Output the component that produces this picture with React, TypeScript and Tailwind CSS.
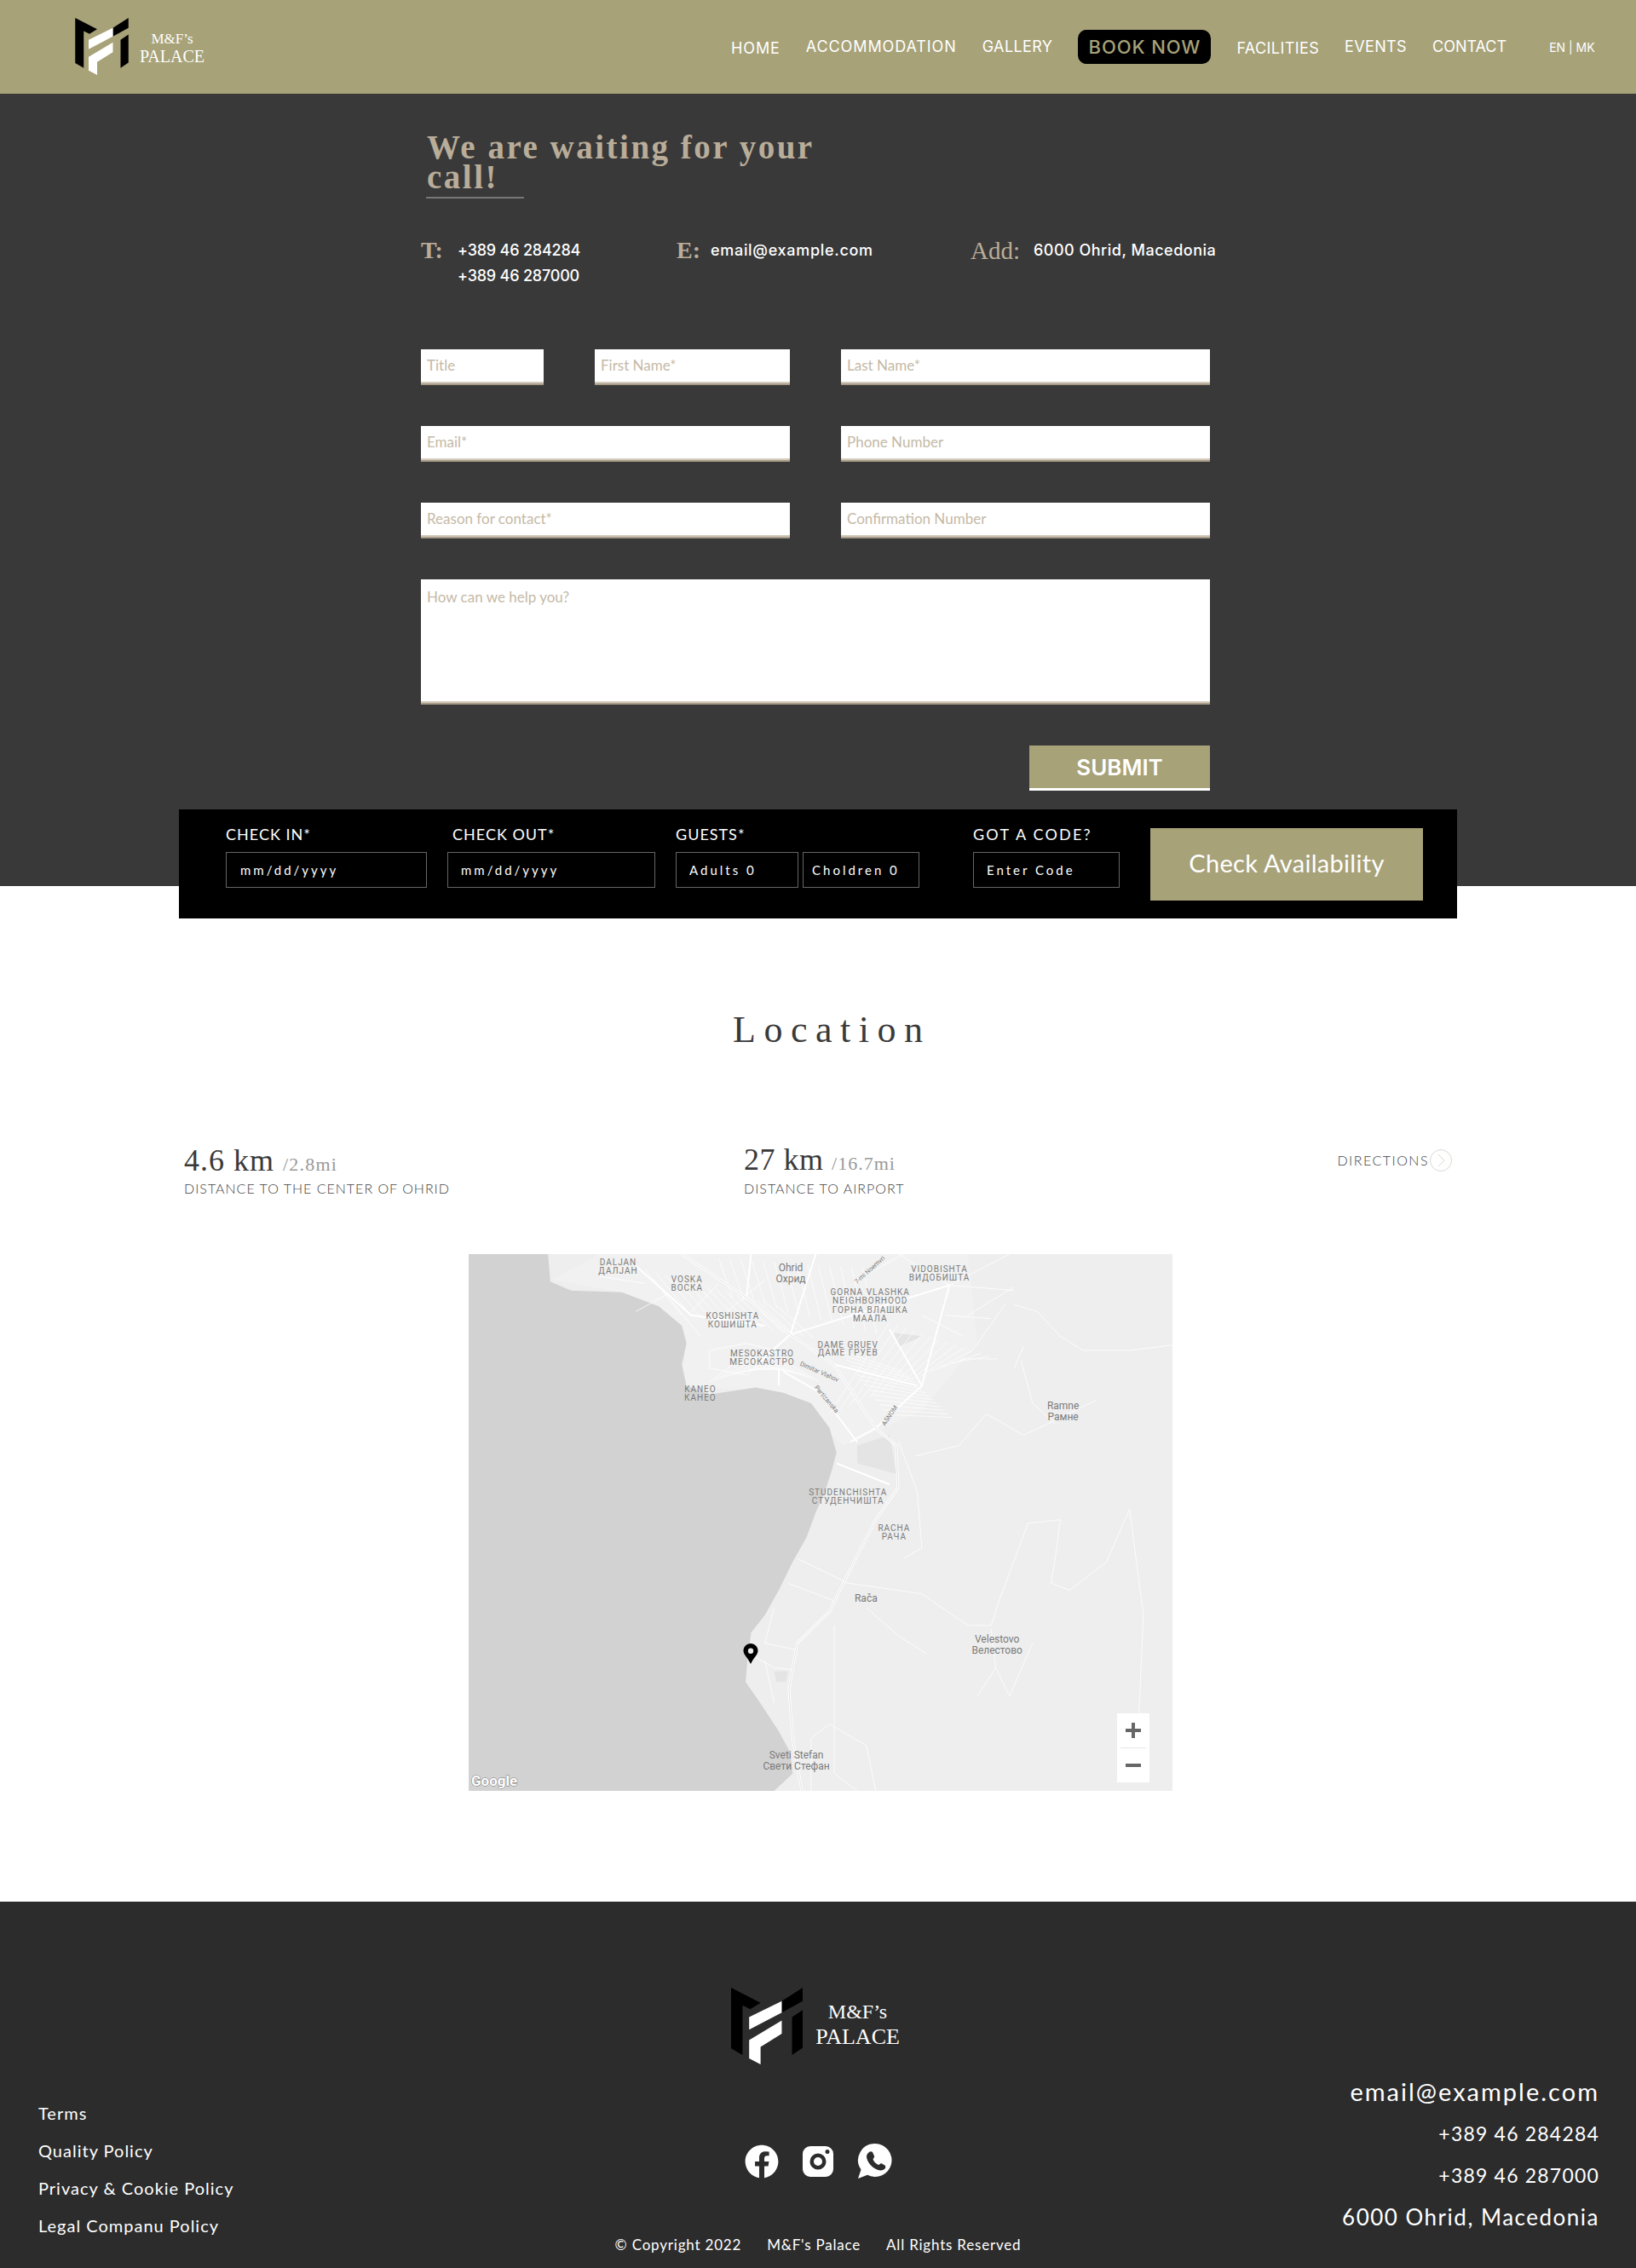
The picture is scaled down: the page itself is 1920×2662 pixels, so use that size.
import { FaFacebook } from "react-icons/fa";

const serif = "font-['Liberation_Serif',serif]";
const gothic = "font-['Lato',sans-serif]";
const mont = "font-['Inter',sans-serif]";

function Logo({ className }: { className: string }) {
  return (
    <svg viewBox="25 25 250 268" className={className}>
      <path fill="#000" d="M25 25 128 78 92 100 65 87V260L25 237Z" />
      <path fill="#000" d="M202 72 275 25V72L202 112Z" />
      <path fill="#fff" d="M88 128 202 72V112L88 172Z" />
      <path fill="#fff" d="M88 208 202 140V186L128 232V293L88 272Z" />
      <path fill="#000" d="M238 128 275 103V235L238 260Z" />
    </svg>
  );
}

function Header() {
  return (
    <header className="flex h-[110px] items-center bg-[#a7a278] pl-[87px] text-white">
      <div className="flex items-center">
        <Logo className="mt-[-2px] h-[67px] w-[65px]" />
        <div className={`${serif} ml-[12px] mt-[2px] text-center leading-[21px]`}>
          <div className="text-[17px]">M&amp;F’s</div>
          <div className="text-[20px]">PALACE</div>
        </div>
      </div>
      <nav className={`${mont} ml-[618px] flex items-center text-[18px]`}>
        <a className="mt-[2px] tracking-[0.9px]">HOME</a>
        <a className="ml-[30px] mt-[-2px] tracking-[0.9px]">ACCOMMODATION</a>
        <a className="ml-[30px] mt-[-2px] tracking-[0.4px]">GALLERY</a>
        <a className="ml-[30px] flex h-[40px] w-[156px] items-center justify-center rounded-[10px] bg-black text-[22px] font-medium tracking-[0.9px] text-[#a7a278]">BOOK NOW</a>
        <a className="ml-[30px] mt-[2px] tracking-[0.4px]">FACILITIES</a>
        <a className="ml-[30px] mt-[-2px] tracking-[0.35px]">EVENTS</a>
        <a className="ml-[30px] mt-[-2px]">CONTACT</a>
        <a className="ml-[50px] text-[14px]">EN | MK</a>
      </nav>
    </header>
  );
}

const fieldClass = `${gothic} box-border h-[42px] bg-white px-[7px] pb-[4px] text-[17px] text-[#555] border-b-2 border-[#a89c88] shadow-[inset_0_-2px_0_#d3cbbd] placeholder:text-[#c5b9a6] outline-none`;

function ContactForm() {
  return (
    <section className="h-[930px] bg-[#393939] pl-[494px] pt-[45px]">
      <h1 className={`${serif} ml-[7px] w-[470px] text-[39px] font-bold leading-[35px] tracking-[2.5px] text-[#b9ad99]`}>
        We are waiting for your call!
      </h1>
      <div className="ml-[6px] mt-[6px] h-[2px] w-[115px] bg-[#777]" />

      <div className={`${mont} mt-[46px] flex h-[60px] text-[18px] font-medium leading-[30px] text-white`}>
        <div className="flex w-[300px]">
          <span className={`${serif} w-[43px] text-[28px] font-bold text-[#b9ad99]`}>T:</span>
          <div className="tracking-[-0.2px]">
            <div>+389 46 284284</div>
            <div>+389 46 287000</div>
          </div>
        </div>
        <div className="flex w-[345px]">
          <span className={`${serif} w-[40px] text-[28px] font-bold text-[#b9ad99]`}>E:</span>
          <div className="tracking-[0.7px]">email@example.com</div>
        </div>
        <div className="flex">
          <span className={`${serif} w-[74px] text-[29px] text-[#b9ad99]`}>Add:</span>
          <div className="tracking-[0.5px]">6000 Ohrid, Macedonia</div>
        </div>
      </div>

      <form className="mt-[71px] flex w-[926px] flex-col gap-[48px]">
        <div className="flex">
          <input placeholder="Title" className={`${fieldClass} w-[144px]`} />
          <input placeholder="First Name*" className={`${fieldClass} ml-[60px] w-[229px]`} />
          <input placeholder="Last Name*" className={`${fieldClass} ml-[60px] w-[433px]`} />
        </div>
        <div className="flex gap-[60px]">
          <input placeholder="Email*" className={`${fieldClass} w-[433px]`} />
          <input placeholder="Phone Number" className={`${fieldClass} w-[433px]`} />
        </div>
        <div className="flex gap-[60px]">
          <input placeholder="Reason for contact*" className={`${fieldClass} w-[433px]`} />
          <input placeholder="Confirmation Number" className={`${fieldClass} w-[433px]`} />
        </div>
        <textarea placeholder="How can we help you?" className={`${fieldClass} h-[147px] w-[926px] resize-none pt-[8px]`} />
        <div className="flex justify-end">
          <button type="button" className={`${mont} h-[53px] w-[212px] border-b-[3px] border-white bg-[#a7a278] text-[26px] font-semibold text-white`}>
            SUBMIT
          </button>
        </div>
      </form>
    </section>
  );
}

function BookingField({ label, placeholder, inputClass, labelClass }: { label?: string; placeholder: string; inputClass: string; labelClass?: string }) {
  return (
    <div className="flex flex-col">
      <label className={`h-[28px] text-[18px] leading-[14px] tracking-[1px] text-white ${labelClass ?? ""}`}>{label ?? "\u00a0"}</label>
      <input
        placeholder={placeholder}
        className={`box-border h-[42px] border border-[#666] bg-black text-[15px] tracking-[3px] text-white placeholder:text-white outline-none ${inputClass}`}
      />
    </div>
  );
}

function BookingBar() {
  return (
    <div className={`${gothic} relative z-10 mx-[210px] mt-[-90px] flex h-[128px] items-start bg-black pl-[55px] pt-[22px]`}>
      <BookingField label="CHECK IN*" placeholder="mm/dd/yyyy" labelClass="tracking-[1.400px]" inputClass="w-[236px] pl-[16px]" />
      <div className="ml-[24px]">
        <BookingField label="CHECK OUT*" placeholder="mm/dd/yyyy" labelClass="pl-[6px]" inputClass="w-[244px] pl-[15px]" />
      </div>
      <div className="ml-[24px]">
        <BookingField label="GUESTS*" placeholder="Adults 0" inputClass="w-[144px] pl-[15px]" />
      </div>
      <div className="ml-[5px]">
        <BookingField placeholder="Choldren 0" inputClass="w-[137px] pl-[10px]" />
      </div>
      <div className="ml-[63px]">
        <BookingField label="GOT A CODE?" placeholder="Enter Code" labelClass="tracking-[2.200px]" inputClass="w-[172px] pl-[15px]" />
      </div>
      <button type="button" className="ml-[36px] h-[85px] w-[320px] bg-[#a7a278] pb-[4px] text-[29px] tracking-[0.3px] text-white">
        Check Availability
      </button>
    </div>
  );
}

const SX = 826 / 1525;
const SY = 630 / 1522;

const areaLabels = [
  { x: 342, y: 49, t: "DALJAN" },
  { x: 342, y: 73, t: "ДАЛЈАН" },
  { x: 491, y: 98, t: "VOSKA" },
  { x: 491, y: 122, t: "ВОСКА" },
  { x: 590, y: 201, t: "KOSHISHTA" },
  { x: 590, y: 225, t: "КОШИШТА" },
  { x: 1038, y: 68, t: "VIDOBISHTA" },
  { x: 1038, y: 92, t: "ВИДОБИШТА" },
  { x: 888, y: 134, t: "GORNA VLASHKA" },
  { x: 888, y: 158, t: "NEIGHBORHOOD" },
  { x: 888, y: 183, t: "ГОРНА ВЛАШКА" },
  { x: 888, y: 207, t: "МААЛА" },
  { x: 840, y: 282, t: "DAME GRUEV" },
  { x: 840, y: 306, t: "ДАМЕ ГРУЕВ" },
  { x: 654, y: 308, t: "MESOKASTRO" },
  { x: 654, y: 332, t: "МЕСОКАСТРО" },
  { x: 520, y: 409, t: "KANEO" },
  { x: 520, y: 433, t: "КАНЕО" },
  { x: 840, y: 702, t: "STUDENCHISHTA" },
  { x: 840, y: 726, t: "СТУДЕНЧИШТА" },
  { x: 940, y: 803, t: "RACHA" },
  { x: 940, y: 827, t: "РАЧА" },
];

const placeLabels = [
  { x: 716, y: 65, t: "Ohrid" },
  { x: 716, y: 96, t: "Охрид" },
  { x: 1306, y: 458, t: "Ramne" },
  { x: 1306, y: 488, t: "Рамне" },
  { x: 879, y: 1004, t: "Rača" },
  { x: 1163, y: 1120, t: "Velestovo" },
  { x: 1163, y: 1150, t: "Велестово" },
  { x: 728, y: 1448, t: "Sveti Stefan" },
  { x: 728, y: 1478, t: "Свети Стефан" },
];

const streetLabels = [
  { x: 776, y: 366, r: 24, t: "Dimitar Vlahov" },
  { x: 790, y: 442, r: 50, t: "Partizanska" },
  { x: 934, y: 488, r: -55, t: "ASNOM" },
  { x: 890, y: 76, r: -42, t: "7-mi Noemvri" },
];

const mainRoads = [
  "M630 27 620 150M770 27 715 255 650 330M1060 115 715 255M1060 115 1000 400 900 520 845 560",
  "M380 60 500 200 660 230M930 240 1000 400M810 340 990 400M700 360 780 420 860 560M690 350 690 400M815 620 930 680",
];

const highway = "M480 27 620 150 715 255 810 340 900 520 945 570 948 690 900 780 830 960 800 1040 730 1130 712 1260 720 1400 740 1549";

const minorRoads = [
  "M1100 200 1200 120M1180 170 1110 300M1050 200 1150 210M1000 200 1090 260M540 300 620 280 680 300 620 370 540 350Z",
  "M420 100 520 260M300 90 400 110M450 140 380 190M560 110 500 190M660 100 560 210M860 100 960 27M950 27 1060 115 1200 130M1060 115 1190 27",
  "M950 560 990 700 1000 860 960 890M985 600 1080 570 1140 480 1220 540 1270 510 1380 440M1200 350 1220 290M1215 330 1240 450 1290 510",
  "M730 890 840 960 1000 990 1100 1080 1150 1080 1170 1000 1230 790 1300 780 1290 880 1280 960 1320 980 1400 900 1450 750 1480 1050 1470 1340",
  "M710 960 810 1010M680 1030 660 1130 730 1150M640 1170 680 1200 720 1205M660 1180 680 1300M810 1080 810 1500 860 1549",
  "M880 1030 950 1110 1010 1160M1150 1090 1160 1200 1120 1280M1160 1200 1190 1280 1240 1130M760 1549 760 1400 800 1360 880 1420 900 1549",
  "M1200 170 1250 190 1300 260 1350 300 1450 300 1543 285",
];

// small street blocks in the city centre, west side and the old town
const cityGrid: string[] = [];
for (let i = 0; i < 14; i++) {
  cityGrid.push(`M${800 + i * 22} ${480 - i * 12} L${930 + i * 18} ${220 + i * 8}`);
  cityGrid.push(`M${820 + i * 8} ${300 + i * 14} L${960 + i * 8} ${360 + i * 10}`);
  cityGrid.push(`M${400 + i * 22} ${70 + i * 8} L${480 + i * 22} ${200 + i * 5}`);
  cityGrid.push(`M${560 + i * 24} ${40 + i * 2} L${590 + i * 24} ${150 + i * 8}`);
  cityGrid.push(`M${540 + i * 12} ${390 - i * 5} L${620 + i * 12} ${310 + i * 6}`);
}

function MapView() {
  return (
    <div className="relative ml-[550px] mt-[57px] h-[630px] w-[826px] overflow-hidden bg-[#eeeeee]">
      <svg viewBox="0 0 826 630" className="absolute inset-0 h-full w-full">
        <g transform={`scale(${SX} ${SY}) translate(-18 -27)`}>
          <path fill="#f1f1f1" d="M200 100 300 27H1100L1120 280 1000 470 900 530 830 570 700 420 480 400 490 260 350 135Z" />
          <path fill="#e4e4e4" d="M860 570 930 540 945 650 860 620ZM940 250 1000 260 950 290ZM680 1210 710 1210 705 1240 685 1240Z" />
          {cityGrid.map((d, i) => (
            <path key={i} d={d} fill="none" stroke="#fff" strokeWidth={0.7} vectorEffect="non-scaling-stroke" />
          ))}
          <path
            fill="#d2d2d2"
            d="M18 27H190L195 105 240 130 350 135 430 175 480 230 490 280 480 340 490 400 540 425 640 405 700 420 760 450 800 520 815 590 805 640 790 700 770 760 750 830 720 900 690 980 660 1050 630 1100 622 1180 618 1240 650 1300 690 1380 715 1440 720 1500 680 1549H18Z"
          />
          {mainRoads.map((d, i) => (
            <path key={i} d={d} fill="none" stroke="#fff" strokeWidth={2} vectorEffect="non-scaling-stroke" />
          ))}
          {minorRoads.map((d, i) => (
            <path key={i} d={d} fill="none" stroke="#fff" strokeWidth={0.8} vectorEffect="non-scaling-stroke" />
          ))}
          <path d={highway} fill="none" stroke="#fff" strokeWidth={3} vectorEffect="non-scaling-stroke" />
          <path d={highway} fill="none" stroke="#d9d9d9" strokeWidth={0.8} vectorEffect="non-scaling-stroke" />
        </g>
        <g className="font-['Roboto',sans-serif]" fill="#7a7a7a" textAnchor="middle">
          {areaLabels.map((l) => (
            <text key={l.t} x={(l.x - 18) * SX} y={(l.y - 27) * SY + 4} fontSize="10" letterSpacing="1">{l.t}</text>
          ))}
          {placeLabels.map((l) => (
            <text key={l.t} x={(l.x - 18) * SX} y={(l.y - 27) * SY + 4} fontSize="12">{l.t}</text>
          ))}
          {streetLabels.map((l) => {
            const x = (l.x - 18) * SX;
            const y = (l.y - 27) * SY;
            return (
              <text key={l.t} x={x} y={y} fontSize="7.500" transform={`rotate(${l.r} ${x} ${y})`}>{l.t}</text>
            );
          })}
        </g>
        <path fill="#000" fillRule="evenodd" d="M331 457c-4.700 0-8.500 3.800-8.500 8.500 0 5 5 8 8.500 15.500 3.500-7.500 8.500-10.500 8.500-15.500 0-4.700-3.800-8.500-8.500-8.500Zm0 5.500a3.200 3.200 0 1 1 0 6.400 3.200 3.200 0 0 1 0-6.400Z" />
        <text x="3" y="624" fontSize="17" fontWeight="700" fill="#fff" stroke="#777" strokeWidth="1" paintOrder="stroke" className="font-['Roboto',sans-serif]">Google</text>
      </svg>
      <div className="absolute left-[761px] top-[539px] flex h-[81px] w-[38px] flex-col items-center bg-white text-[#666]">
        <svg viewBox="0 0 38 40" className="h-[40px] w-[38px]"><path d="M19 11v18M10 20h18" stroke="currentColor" strokeWidth="4" /></svg>
        <div className="h-px w-[30px] bg-[#e6e6e6]" />
        <svg viewBox="0 0 38 40" className="h-[40px] w-[38px]"><path d="M10 20h18" stroke="currentColor" strokeWidth="4" /></svg>
      </div>
    </div>
  );
}

function Location() {
  return (
    <section className="h-[1154px] bg-white">
      <h2 className={`${serif} pl-[860px] pt-[105px] text-[44px] leading-[52px] tracking-[9.500px] text-[#3a3a3a]`}>Location</h2>
      <div className="mx-[216px] mt-[106px] flex h-[74px] items-start">
        <div className="w-[657px]">
          <div className={`${serif} h-[42px] text-[36px] leading-[42px] tracking-[1px] text-[#3a3a3a]`}>
            4.6 km <span className="text-[22px] tracking-[1.200px] text-[#999]">/2.8mi</span>
          </div>
          <div className={`${gothic} text-[16px] font-light leading-[24px] tracking-[1px] text-[#444]`}>DISTANCE TO THE CENTER OF OHRID</div>
        </div>
        <div>
          <div className={`${serif} h-[42px] text-[36px] leading-[40px] tracking-[0.500px] text-[#3a3a3a]`}>
            27 km <span className="text-[22px] tracking-[1px] text-[#999]">/16.7mi</span>
          </div>
          <div className={`${gothic} text-[16px] font-light leading-[24px] tracking-[1px] text-[#444]`}>DISTANCE TO AIRPORT</div>
        </div>
        <div className={`${gothic} ml-auto mt-[8px] flex items-center text-[16px] font-light tracking-[1.500px] text-[#444]`}>
          DIRECTIONS
          <svg viewBox="0 0 26 26" className="ml-[1px] h-[26px] w-[26px]">
            <circle cx="13" cy="13" r="12.500" fill="none" stroke="#d8d8d2" />
            <path d="M10 6l7 7-7 7" fill="none" stroke="#d8d8d2" />
          </svg>
        </div>
      </div>
      <MapView />
    </section>
  );
}

function Footer() {
  return (
    <footer className="grid h-[430px] grid-cols-[1fr_500px_1fr] bg-[#2c2c2c] text-white">
      <div className={`${gothic} flex flex-col justify-end gap-[18px] pb-[37px] pl-[45px] text-[20px] leading-[26px] tracking-[1px]`}>
        <a>Terms</a>
        <a>Quality Policy</a>
        <a>Privacy &amp; Cookie Policy</a>
        <a>Legal Companu Policy</a>
      </div>
      <div className="flex flex-col items-center pt-[101px]">
        <div className="ml-[-6px] flex items-center">
          <Logo className="h-[90px] w-[84px]" />
          <div className={`${serif} ml-[15px] mt-[-4px] text-center leading-[29px]`}>
            <div className="text-[24px]">M&amp;F’s</div>
            <div className="text-[26px]">PALACE</div>
          </div>
        </div>
        <div className="mt-[93px] flex items-center gap-[28px]">
          <FaFacebook className="h-[40px] w-[40px]" />
          <svg viewBox="0 0 36 36" className="h-[36px] w-[36px]">
            <path fill="#fff" fillRule="evenodd" d="M9 0h18a9 9 0 0 1 9 9v18a9 9 0 0 1-9 9H9a9 9 0 0 1-9-9V9a9 9 0 0 1 9-9Zm9 8.500a9.500 9.500 0 1 0 0 19 9.500 9.500 0 0 0 0-19Zm0 4.500a5 5 0 1 1 0 10 5 5 0 0 1 0-10ZM29 4a2.500 2.500 0 1 0 0 5 2.500 2.500 0 0 0 0-5Z" />
          </svg>
          <svg viewBox="0 0 41 41" className="h-[41px] w-[41px]">
            <path fill="#fff" d="M21 0a19.500 19.500 0 1 1-9 36.800L1 41l3.500-10.500A19.500 19.500 0 0 1 21 0Z" />
            <path fill="#2c2c2c" d="M14 10c1-1 3-1 4 0l2 4.500c.4 1 0 2-1 3-.5.6-.5 1 0 2 1 2 3 4 5 5 1 .5 1.500.5 2 0 1-1 2-1.400 3-1l3.500 2c1 1 1 3 0 4-2 2-5 2.500-8 1.500-6-2-11-7-13-13-1-3-.5-6 2.500-8Z" />
          </svg>
        </div>
        <div className={`${gothic} mt-[65px] flex gap-[30px] text-[17px] font-normal tracking-[0.8px]`}>
          <span>© Copyright 2022</span>
          <span>M&amp;F's Palace</span>
          <span>All Rights Reserved</span>
        </div>
      </div>
      <div className={`${gothic} flex flex-col items-end justify-end gap-[19px] pb-[45px] pr-[43px] leading-[30px]`}>
        <a className="text-[29px] tracking-[2px]">email@example.com</a>
        <a className="text-[23px] tracking-[1.200px]">+389 46 284284</a>
        <a className="text-[23px] tracking-[1.200px]">+389 46 287000</a>
        <a className="text-[26px] tracking-[1.500px]">6000 Ohrid, Macedonia</a>
      </div>
    </footer>
  );
}

export default function App() {
  return (
    <div className="w-[1920px]">
      <Header />
      <ContactForm />
      <BookingBar />
      <Location />
      <Footer />
    </div>
  );
}
